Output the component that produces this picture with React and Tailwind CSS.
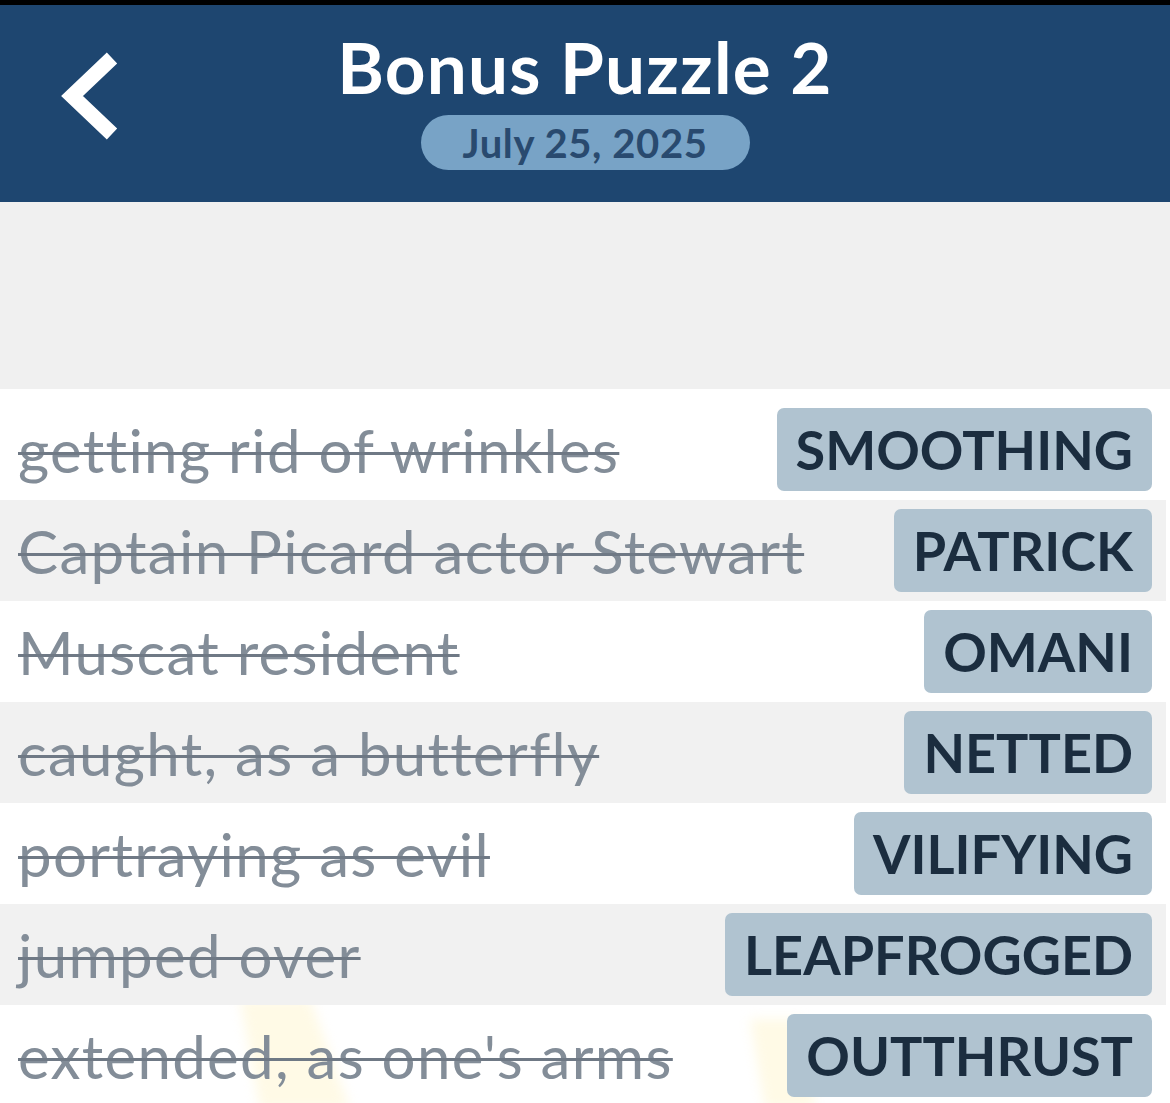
import React from 'react';

const clues = [
  { clue: 'getting rid of wrinkles', answer: 'SMOOTHING' },
  { clue: 'Captain Picard actor Stewart', answer: 'PATRICK' },
  { clue: 'Muscat resident', answer: 'OMANI' },
  { clue: 'caught, as a butterfly', answer: 'NETTED' },
  { clue: 'portraying as evil', answer: 'VILIFYING' },
  { clue: 'jumped over', answer: 'LEAPFROGGED' },
  { clue: "extended, as one's arms", answer: 'OUTTHRUST' },
];

const BackIcon = () => (
  <svg width="70" height="100" viewBox="50 45 70 100" className="block">
    <polyline
      points="112,58 72,96 112,134"
      fill="none"
      stroke="#ffffff"
      strokeWidth="15"
      strokeLinejoin="miter"
      strokeLinecap="butt"
    />
  </svg>
);

const ClueRow = ({ clue, answer, shaded }) => (
  <div
    className={`flex items-center justify-between h-[101px] pl-[18px] pr-[14px] mr-[4px] ${
      shaded ? 'bg-[#f1f1f1]' : 'bg-transparent'
    }`}
  >
    <span className="text-[60px] leading-none tracking-[1.3px] text-[#838d98] line-through decoration-[#6f7985] decoration-[3px] whitespace-nowrap">
      {clue}
    </span>
    <span className="h-[83px] flex items-center px-[19px] rounded-[7px] bg-[#b0c3d0] text-[#1b2d3f] text-[54px] font-bold leading-none">
      {answer}
    </span>
  </div>
);

const App = () => {
  return (
    <div className="w-[1170px] min-h-[1103px] bg-white overflow-hidden" style={{ fontFamily: 'Lato, "Noto Sans", sans-serif' }}>
      <div className="h-[5px] bg-black" />
      <header className="relative h-[197px] bg-[#1e4670] flex flex-col items-center">
        <div className="absolute left-[50px] top-[40px]">
          <BackIcon />
        </div>
        <h1 className="mt-[24px] text-[71px] font-bold leading-[76px] tracking-[1.2px] text-white">Bonus Puzzle 2</h1>
        <div className="mt-[10px] h-[55px] w-[329px] rounded-full bg-[#78a3c6] flex items-center justify-center">
          <span className="text-[40px] font-bold leading-none tracking-[0.6px] text-[#294a6f]">July 25, 2025</span>
        </div>
      </header>
      <div className="h-[187px] bg-[#f0f0f0]" />
      <div className="relative bg-white pt-[10px]">
        <svg className="absolute left-0 top-[560px] pointer-events-none blur-[6px]" width="1170" height="160" viewBox="0 0 1170 160">
          <polygon points="240,50 310,50 350,160 260,160" fill="#fff5d2" opacity="0.55" />
          <polygon points="750,70 805,70 815,160 765,160" fill="#fff5d2" opacity="0.55" />
        </svg>
        <div className="relative">
          {clues.map((c, i) => (
            <ClueRow key={c.answer} clue={c.clue} answer={c.answer} shaded={i % 2 === 1} />
          ))}
        </div>
      </div>
    </div>
  );
};

export default App;
